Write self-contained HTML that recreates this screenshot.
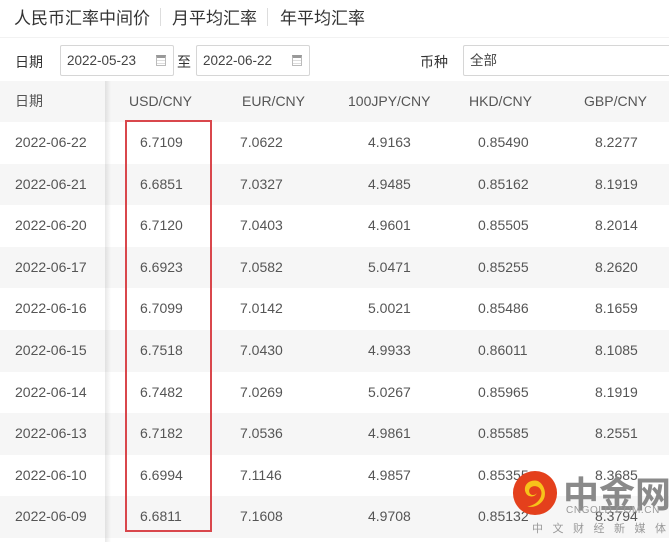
<!DOCTYPE html>
<html><head><meta charset="utf-8"><style>
*{margin:0;padding:0;box-sizing:border-box}
body{width:669px;height:542px;overflow:hidden;background:#fff;font-family:"Liberation Sans","Noto Sans CJK SC",sans-serif;color:#555;position:relative}
.a{position:absolute;white-space:nowrap}
.tab{top:4px;font-size:17px;color:#333}
.sep{position:absolute;top:8px;width:1px;height:18px;background:#ddd}
.inp{position:absolute;border:1px solid #d6d6d6;border-radius:2px;height:31px;top:45px;font-size:13.5px;line-height:29px;padding-left:6px;color:#444}
.cal{position:absolute;top:9px;width:10px;height:11px;border:1px solid #bbb;border-top:3px solid #999;background:repeating-linear-gradient(#fff 0 2px,#ddd 2px 3px)}
.row{position:absolute;left:0;width:669px;height:41.6px;font-size:14px;line-height:41.6px;color:#555}
.row span{position:absolute;top:0}
.g{background:#f6f6f6}
</style></head><body>
<div class="a tab" style="left:14px">人民币汇率中间价</div>
<div class="sep" style="left:160px"></div>
<div class="a tab" style="left:172px">月平均汇率</div>
<div class="sep" style="left:267px"></div>
<div class="a tab" style="left:280px">年平均汇率</div>
<div style="position:absolute;left:0;top:37px;width:669px;height:1px;background:#f2f2f2"></div>

<div class="a" style="left:15px;top:52px;font-size:14px;color:#333">日期</div>
<div class="inp" style="left:60px;width:114px">2022-05-23<div class="cal" style="left:95px"></div></div>
<div class="a" style="left:177px;top:52px;font-size:14px;color:#333">至</div>
<div class="inp" style="left:196px;width:114px">2022-06-22<div class="cal" style="left:95px"></div></div>
<div class="a" style="left:420px;top:52px;font-size:14px;color:#333">币种</div>
<div class="inp" style="left:463px;width:220px">全部</div>

<div class="row g" style="top:81px;height:41px;line-height:41px"><span style="left:15px">日期</span><span style="left:129px">USD/CNY</span><span style="left:242px">EUR/CNY</span><span style="left:348px">100JPY/CNY</span><span style="left:469px">HKD/CNY</span><span style="left:584px">GBP/CNY</span></div>

<div class="row" style="top:122px"><span style="left:15px">2022-06-22</span><span style="left:140px">6.7109</span><span style="left:240px">7.0622</span><span style="left:368px">4.9163</span><span style="left:478px">0.85490</span><span style="left:595px">8.2277</span></div>
<div class="row g" style="top:163.6px"><span style="left:15px">2022-06-21</span><span style="left:140px">6.6851</span><span style="left:240px">7.0327</span><span style="left:368px">4.9485</span><span style="left:478px">0.85162</span><span style="left:595px">8.1919</span></div>
<div class="row" style="top:205.2px"><span style="left:15px">2022-06-20</span><span style="left:140px">6.7120</span><span style="left:240px">7.0403</span><span style="left:368px">4.9601</span><span style="left:478px">0.85505</span><span style="left:595px">8.2014</span></div>
<div class="row g" style="top:246.8px"><span style="left:15px">2022-06-17</span><span style="left:140px">6.6923</span><span style="left:240px">7.0582</span><span style="left:368px">5.0471</span><span style="left:478px">0.85255</span><span style="left:595px">8.2620</span></div>
<div class="row" style="top:288.4px"><span style="left:15px">2022-06-16</span><span style="left:140px">6.7099</span><span style="left:240px">7.0142</span><span style="left:368px">5.0021</span><span style="left:478px">0.85486</span><span style="left:595px">8.1659</span></div>
<div class="row g" style="top:330px"><span style="left:15px">2022-06-15</span><span style="left:140px">6.7518</span><span style="left:240px">7.0430</span><span style="left:368px">4.9933</span><span style="left:478px">0.86011</span><span style="left:595px">8.1085</span></div>
<div class="row" style="top:371.6px"><span style="left:15px">2022-06-14</span><span style="left:140px">6.7482</span><span style="left:240px">7.0269</span><span style="left:368px">5.0267</span><span style="left:478px">0.85965</span><span style="left:595px">8.1919</span></div>
<div class="row g" style="top:413.2px"><span style="left:15px">2022-06-13</span><span style="left:140px">6.7182</span><span style="left:240px">7.0536</span><span style="left:368px">4.9861</span><span style="left:478px">0.85585</span><span style="left:595px">8.2551</span></div>
<div class="row" style="top:454.8px"><span style="left:15px">2022-06-10</span><span style="left:140px">6.6994</span><span style="left:240px">7.1146</span><span style="left:368px">4.9857</span><span style="left:478px">0.85355</span><span style="left:595px">8.3685</span></div>
<div class="row g" style="top:496.4px"><span style="left:15px">2022-06-09</span><span style="left:140px">6.6811</span><span style="left:240px">7.1608</span><span style="left:368px">4.9708</span><span style="left:478px">0.85132</span><span style="left:595px">8.3794</span></div>

<div style="position:absolute;left:105px;top:81px;width:6px;height:461px;background:linear-gradient(to right,rgba(0,0,0,0.09),rgba(0,0,0,0))"></div>
<div style="position:absolute;left:125px;top:120px;width:87px;height:412px;border:2px solid #d9474c"></div>

<svg style="position:absolute;left:512px;top:470px" width="46" height="46" viewBox="0 0 48 48">
<circle cx="24" cy="24" r="23" fill="#e4401c"/>
<path d="M24 11c-8 0-12 6-10 12s10 6 12 1c-2 3-7 3-8-1s3-7 7-6c5 1 7 6 5 11s-7 9-14 10c8 2 16-3 18-10s-3-17-10-17z" fill="#f7c31a"/>
</svg>
<div class="a" style="left:563px;top:466px;font-size:36px;font-weight:bold;color:#8a8a8a;letter-spacing:0px">中金网</div>
<div class="a" style="left:566px;top:505px;font-size:10px;color:#999;letter-spacing:0.6px">CNGOLD.COM.CN</div>
<div class="a" style="left:532px;top:520px;font-size:11px;color:#999;letter-spacing:9.5px">中文财经新媒体</div>
</body></html>
